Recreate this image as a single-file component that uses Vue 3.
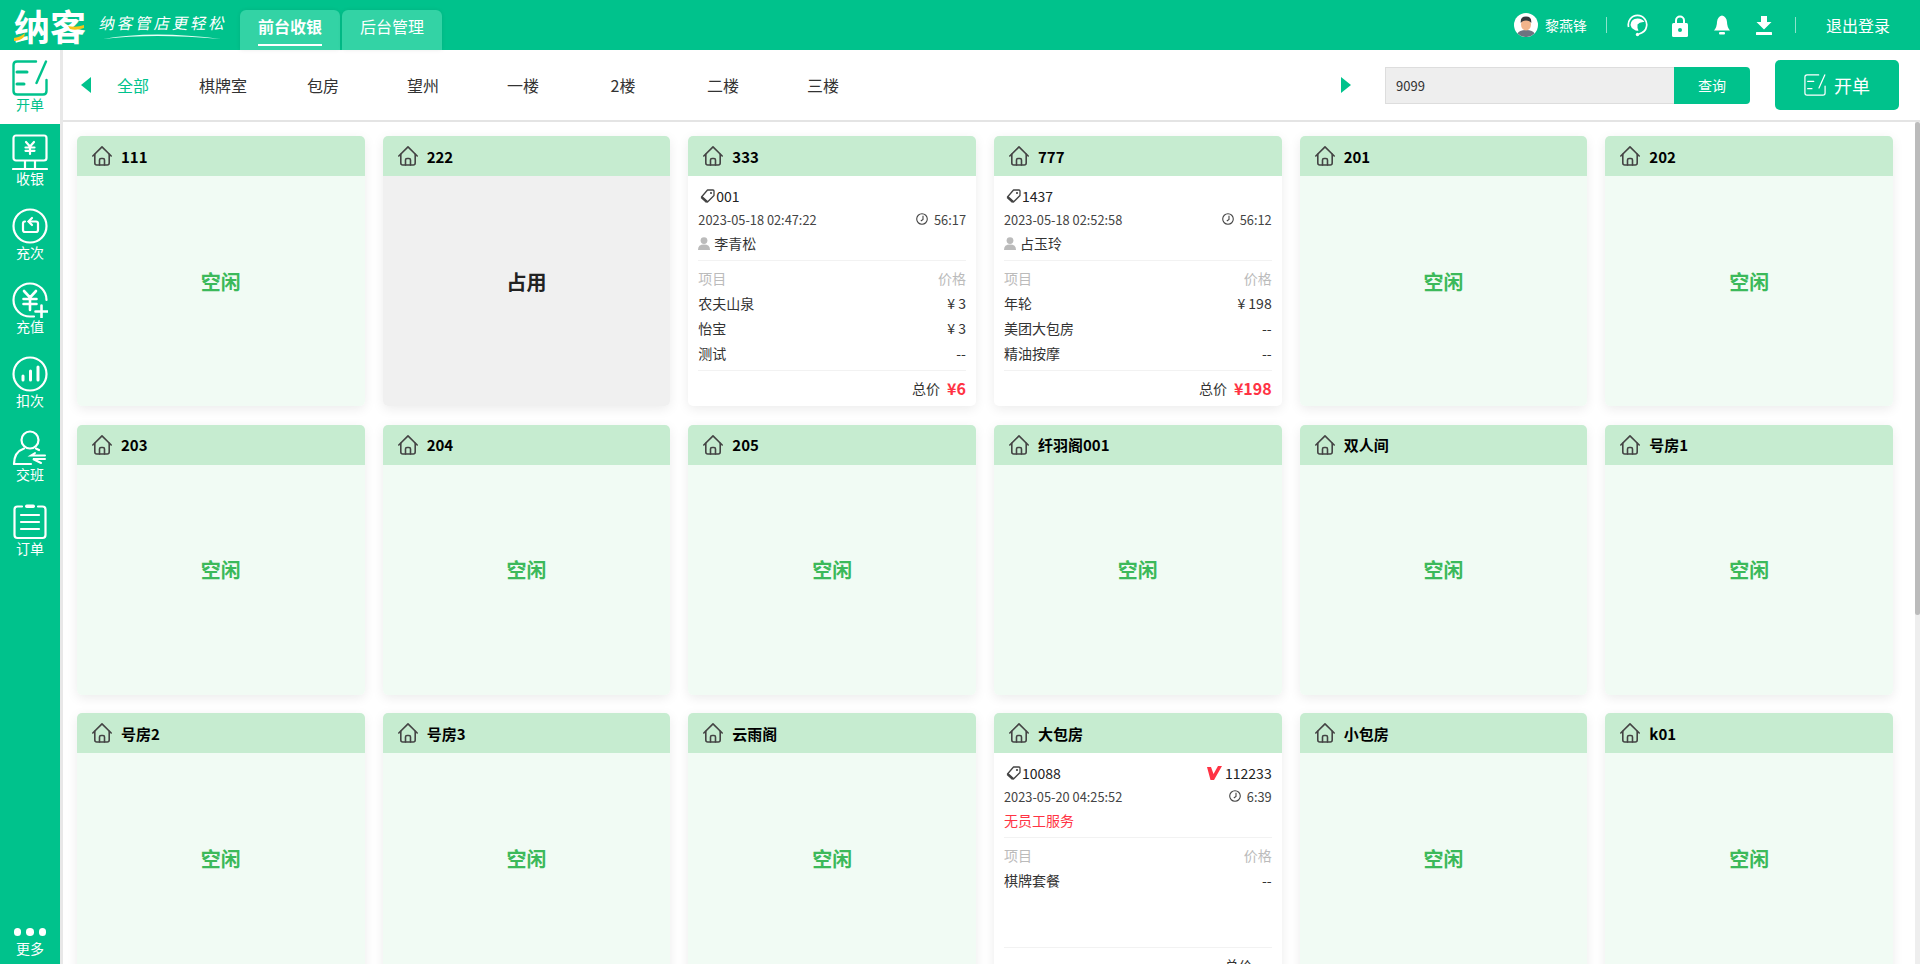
<script setup>
const filters = ['全部', '棋牌室', '包房', '望州', '一楼', '2楼', '二楼', '三楼']

const idle = name => ({ name, state: 'idle' })
const rooms = [
  idle('111'),
  { name: '222', state: 'busy' },
  {
    name: '333', state: 'order', tag: '001', date: '2023-05-18 02:47:22', timer: '56:17', staff: '李青松', total: '¥6',
    items: [['农夫山泉', '¥ 3'], ['怡宝', '¥ 3'], ['测试', '--']]
  },
  {
    name: '777', state: 'order', tag: '1437', date: '2023-05-18 02:52:58', timer: '56:12', staff: '占玉玲', total: '¥198',
    items: [['年轮', '¥ 198'], ['美团大包房', '--'], ['精油按摩', '--']]
  },
  idle('201'), idle('202'), idle('203'), idle('204'), idle('205'),
  idle('纤羽阁001'), idle('双人间'), idle('号房1'), idle('号房2'), idle('号房3'), idle('云雨阁'),
  {
    name: '大包房', state: 'order', tag: '10088', vip: '112233', date: '2023-05-20 04:25:52', timer: '6:39', total: '--',
    items: [['棋牌套餐', '--']]
  },
  idle('小包房'), idle('k01')
]
</script>

<template>
  <div class="app">
    <header class="topbar">
      <div class="logo">
        <span class="logo-mark">纳客</span>
        <svg class="logo-accent" width="76" height="32" viewBox="0 0 76 32">
          <path d="M0 27 Q7 26 11 22 L10 26 Q6 30 0 30Z" fill="#f5c518" />
          <path d="M54 15 Q62 17 70 14 L70 17 Q62 20 56 18Z" fill="#f5c518" />
        </svg>
      </div>
      <div class="slogan">
        <span class="slogan-text">纳客管店更轻松</span>
        <svg class="slogan-line" width="118" height="8" viewBox="0 0 118 8">
          <path d="M0 6 Q50 -3 118 6 Q50 0 0 6Z" fill="#e8fff6" />
        </svg>
      </div>
      <nav class="tabs">
        <a class="tab tab-active"><span>前台收银</span></a>
        <a class="tab"><span>后台管理</span></a>
      </nav>
      <div class="top-right">
        <svg class="avatar" width="24" height="24" viewBox="0 0 24 24">
          <circle cx="12" cy="12" r="12" fill="#fff" />
          <path d="M3.5 20.5 Q5 17 12 17 Q19 17 20.5 20.5 A12 12 0 0 1 3.5 20.5Z" fill="#6d7480" />
          <ellipse cx="12" cy="11.5" rx="5" ry="6" fill="#f2b48c" />
          <path d="M6.8 10 Q6 3.5 12 3.5 Q18 3.5 17.2 10 Q16 7.5 12 7.5 Q8 7.5 6.8 10Z" fill="#33383d" />
        </svg>
        <span class="user-name">黎燕锋</span>
        <i class="top-sep sep-a"></i>
        <svg class="ti ti-head" width="21" height="24" viewBox="0 0 21 24" fill="none" stroke="#fff">
          <path d="M1.6 14 A9.2 9.2 0 1 1 19.4 14 Q18.5 19 12 21" stroke-width="1.7" />
          <path d="M3.5 12 Q4 5.5 10.5 5.5 Q15.5 5.5 17.5 9 Q12.5 8.5 10.5 11.5 Q10 15 11.5 17.5 Q9.5 18.5 7 16.5 Q4 15 3.5 12Z" fill="#fff" stroke="none" />
          <circle cx="10.5" cy="21.5" r="1.7" fill="#fff" stroke="none" />
        </svg>
        <svg class="ti ti-lock" width="16" height="23" viewBox="0 0 16 23">
          <path d="M4 10 V6.5 A4 4 0 0 1 12 6.5 V10" fill="none" stroke="#fff" stroke-width="2" />
          <rect y="9" width="16" height="14" rx="1.5" fill="#fff" />
          <circle cx="8" cy="16" r="2" fill="#00c28c" />
        </svg>
        <svg class="ti ti-bell" width="16" height="20" viewBox="0 0 16 20">
          <path d="M8 0.5 Q12.5 1.5 13 7 Q13 12 16 15.5 H0 Q3 12 3 7 Q3.5 1.5 8 0.5Z" fill="#fff" />
          <rect x="5" y="17" width="6" height="2.4" rx="1" fill="#fff" />
        </svg>
        <svg class="ti ti-down" width="16" height="19" viewBox="0 0 16 19">
          <path d="M5 0 H11 V6 H15.5 L8 13.5 L0.5 6 H5Z" fill="#fff" />
          <rect y="16" width="16" height="3" rx="0.5" fill="#fff" />
        </svg>
        <i class="top-sep sep-b"></i>
        <span class="logout">退出登录</span>
      </div>
    </header>

    <div class="main">
      <aside class="sidebar">
        <a class="side-item side-active">
          <svg width="36" height="36" viewBox="0 0 36 36" fill="none" stroke="#00c28c" stroke-width="2.4" stroke-linecap="round">
            <path d="M24 1.5 H5 Q1.5 1.5 1.5 5 V31 Q1.5 34.5 5 34.5 H31 Q34.5 34.5 34.5 31 V20" />
            <path d="M34 1.5 L24.5 23" />
            <path d="M5 12 H15" stroke-width="3" />
            <path d="M5 24 H12" stroke-width="3" />
          </svg>
          <span>开单</span>
        </a>
        <a class="side-item">
          <svg width="36" height="36" viewBox="0 0 36 36" fill="none" stroke="#fff" stroke-width="2.2" stroke-linecap="round">
            <rect x="1.5" y="1.5" width="33" height="25" rx="2.5" />
            <path d="M13 27 V34 M23 27 V34" />
            <path d="M1 35 H35" />
            <path d="M14 8 L18 12.5 L22 8 M18 12.5 V20 M13.5 13.5 H22.5 M13.5 16.8 H22.5" stroke-width="2.2" />
          </svg>
          <span>收银</span>
        </a>
        <a class="side-item">
          <svg width="36" height="36" viewBox="0 0 36 36" fill="none" stroke="#fff" stroke-width="2.2" stroke-linecap="round">
            <circle cx="18" cy="18" r="16.5" />
            <path d="M19 13.5 H24 Q26 13.5 26 15.5 V22 Q26 24 24 24 H13 Q11 24 11 22 V15.5 Q11 13.5 13 13.5" />
            <path d="M20 10 L16.5 13.5 L20 17" />
          </svg>
          <span>充次</span>
        </a>
        <a class="side-item">
          <svg width="36" height="36" viewBox="0 0 36 36" fill="none" stroke="#fff" stroke-width="2.2" stroke-linecap="round">
            <path d="M34.5 18 A16.5 16.5 0 1 0 18 34.5 H22" />
            <path d="M12 9 L18 15.5 L24 9 M18 15.5 V28 M11.5 17 H24.5 M11.5 22 H24.5" stroke-width="2.6" />
            <path d="M23.5 29.5 H35.5 M29.5 23.5 V35.5" stroke-width="2.6" />
          </svg>
          <span>充值</span>
        </a>
        <a class="side-item">
          <svg width="36" height="36" viewBox="0 0 36 36" fill="none" stroke="#fff" stroke-width="2.2" stroke-linecap="round">
            <circle cx="18" cy="18" r="16.5" />
            <path d="M11 24 V20 M18.5 24 V15 M26 24 V11" stroke-width="3" />
          </svg>
          <span>扣次</span>
        </a>
        <a class="side-item">
          <svg width="36" height="36" viewBox="0 0 36 36" fill="none" stroke="#fff" stroke-width="2.2" stroke-linecap="round">
            <circle cx="18" cy="10" r="8.5" />
            <path d="M2 34 Q2 22 12 18.5 M24 18.5 L27 20" />
            <path d="M2 34 H19" />
            <path d="M23 23 L19 25.5 H33 M33 29 H21 L29 33" stroke-width="2" />
          </svg>
          <span>交班</span>
        </a>
        <a class="side-item">
          <svg width="36" height="36" viewBox="0 0 36 36" fill="none" stroke="#fff" stroke-width="2.2" stroke-linecap="round">
            <path d="M10 2.5 H5.5 Q2.5 2.5 2.5 5.5 V31 Q2.5 34 5.5 34 H30.5 Q33.5 34 33.5 31 V5.5 Q33.5 2.5 30.5 2.5 H26" />
            <rect x="13" y="0.5" width="10" height="3.4" rx="1.7" fill="#fff" stroke="none" />
            <path d="M9 11 H27 M9 18 H27 M9 25 H27" />
          </svg>
          <span>订单</span>
        </a>
        <a class="side-item side-more">
          <div class="dots"><i></i><i></i><i></i></div>
          <span>更多</span>
        </a>
      </aside>

      <section class="content">
        <div class="filter-bar">
          <i class="arrow arrow-left"></i>
          <ul class="filters">
            <li v-for="(f, i) in filters" :key="f" :class="{ 'filter-active': i === 0 }">{{ f }}</li>
          </ul>
          <i class="arrow arrow-right"></i>
          <div class="search">
            <input class="search-input" value="9099" />
            <button class="search-btn">查询</button>
          </div>
          <button class="open-btn">
            <svg width="22" height="22" viewBox="0 0 36 36" fill="none" stroke="#fff" stroke-width="2" stroke-linecap="round">
              <path d="M24 1.5 H5 Q1.5 1.5 1.5 5 V31 Q1.5 34.5 5 34.5 H31 Q34.5 34.5 34.5 31 V20" />
              <path d="M34 1.5 L24.5 23" />
              <path d="M6 12 H16 M6 24 H13" />
            </svg>
            <span>开单</span>
          </button>
        </div>

        <div class="rooms-wrap">
          <div class="rooms">
            <article v-for="room in rooms" :key="room.name" class="card">
              <div class="card-head">
                <svg width="20" height="20" viewBox="0 0 20 20" fill="none" stroke="#444" stroke-width="1.6" stroke-linejoin="round" stroke-linecap="round">
                  <path d="M0.8 10 L10 0.9 L19.2 10" />
                  <path d="M2.8 8.2 V17 Q2.8 19 4.8 19 H15.2 Q17.2 19 17.2 17 V8.2" />
                  <path d="M7.5 19 V14 Q7.5 12.5 9 12.5 H11 Q12.5 12.5 12.5 14 V19" />
                </svg>
                <span>{{ room.name }}</span>
              </div>

              <div v-if="room.state === 'idle'" class="card-state state-idle">空闲</div>
              <div v-else-if="room.state === 'busy'" class="card-state state-busy">占用</div>

              <div v-else class="card-body">
                <div class="line line-tag">
                  <span class="tag">
                    <svg width="15" height="14" viewBox="0 0 15 14">
                      <path d="M7.5 1 H13 Q14 1 14 2 V6.5 L7.5 13 L1.5 8 Z" fill="none" stroke="#444" stroke-width="1.3" stroke-linejoin="round" />
                      <path d="M1.5 8 L7 13" stroke="#444" stroke-width="2.4" />
                      <circle cx="11" cy="4" r="1.1" fill="#444" />
                    </svg>{{ room.tag }}
                  </span>
                  <span v-if="room.vip" class="vip">
                    <svg width="15" height="14" viewBox="0 0 15 14">
                      <path d="M0 1 H4 L6.5 8 L11 0 H15 L7 14 H3.5Z" fill="#ff3344" />
                    </svg>{{ room.vip }}
                  </span>
                </div>
                <div class="line line-date">
                  <span>{{ room.date }}</span>
                  <span class="timer">
                    <svg width="12" height="12" viewBox="0 0 12 12" fill="none" stroke="#444" stroke-width="1.1">
                      <circle cx="6" cy="6" r="5.3" />
                      <path d="M7 2.8 V6.5 L4.8 8" />
                    </svg>{{ room.timer }}
                  </span>
                </div>
                <div v-if="room.staff" class="line-staff">
                  <svg width="12" height="13" viewBox="0 0 12 13" fill="#bbb">
                    <circle cx="6" cy="3.6" r="3.4" />
                    <path d="M0 13 Q0 7.6 6 7.6 Q12 7.6 12 13Z" />
                  </svg>
                  <span>{{ room.staff }}</span>
                </div>
                <div v-else class="line-staff no-staff">无员工服务</div>

                <div class="items">
                  <div class="row row-head"><span>项目</span><span>价格</span></div>
                  <div v-for="it in room.items" :key="it[0]" class="row">
                    <span>{{ it[0] }}</span><span>{{ it[1] }}</span>
                  </div>
                </div>
                <div class="total">
                  <span>总价</span><b>{{ room.total }}</b>
                </div>
              </div>
            </article>
          </div>
          <div class="scrollbar"><div class="scrollbar-thumb"></div></div>
        </div>
      </section>
    </div>
  </div>
</template>

<style>
html, body { margin: 0; height: 100%; overflow: hidden; background: #fff; }
</style>

<style scoped>
.app {
  height: 964px;
  display: flex;
  flex-direction: column;
  overflow: hidden;
  font-family: "Noto Sans CJK SC", "Open Sans", sans-serif;
  color: #333;
  font-size: 14px;
}

/* top bar */
.topbar {
  height: 50px;
  flex: none;
  background: #00c28c;
  display: flex;
  align-items: flex-end;
  color: #fff;
}
.logo { position: relative; width: 100px; height: 50px; flex: none; }
.logo-mark {
  display: block;
  padding-left: 14px;
  font-size: 36px;
  line-height: 50px;
  font-weight: 700;
  color: #fff;
}
.logo-accent { position: absolute; left: 14px; top: 11px; }
.slogan { position: relative; width: 140px; height: 50px; flex: none; }
.slogan-text {
  display: block;
  font-size: 15.5px;
  line-height: 44px;
  letter-spacing: 2.8px;
  transform: skewX(-12deg);
  transform-origin: left center;
  white-space: nowrap;
  font-weight: 400;
}
.slogan-line { position: absolute; left: 3px; top: 33px; }
.tabs { display: flex; gap: 2px; }
.tab {
  width: 100px;
  height: 40px;
  background: #33d3a5;
  border-radius: 6px 6px 0 0;
  display: flex;
  justify-content: center;
  align-items: flex-start;
  font-size: 16px;
  line-height: 32px;
  box-shadow: 0 0 4px rgba(0, 0, 0, 0.08);
}
.tab span { display: block; height: 34px; }
.tab-active { font-weight: 700; }
.tab-active span { border-bottom: 2px solid #fff; }
.top-right {
  margin-left: auto;
  height: 50px;
  display: flex;
  align-items: center;
  padding-right: 30px;
}
.user-name { margin-left: 7px; margin-right: -1px; }
.top-sep { width: 1px; height: 16px; background: rgba(255, 255, 255, 0.55); }
.sep-a { margin-left: 20px; }
.ti { flex: none; }
.ti-head { margin-left: 20px; }
.ti-lock { margin-left: 24px; }
.ti-bell { margin-left: 26px; }
.ti-down { margin-left: 26px; }
.sep-b { margin-left: 23px; }
.logout { margin-left: 30px; font-size: 16px; }

/* layout */
.main { flex: 1; min-height: 0; display: flex; }
.sidebar {
  width: 60px;
  flex: none;
  background: #00c28c;
  border-right: 3px solid #e8e8e8;
  display: flex;
  flex-direction: column;
  color: #fff;
}
.side-item {
  height: 74px;
  flex: none;
  box-sizing: border-box;
  padding-top: 10px;
  display: flex;
  flex-direction: column;
  align-items: center;
}
.side-item span { font-size: 14px; line-height: 16px; }
.side-active { background: #fff; color: #00c28c; }
.side-more { margin-top: auto; height: 50px; padding-top: 14px; }
.dots { display: flex; gap: 5px; height: 7px; margin-bottom: 5px; }
.dots i { width: 7.5px; height: 7.5px; border-radius: 50%; background: #fff; }

/* filter bar */
.content { flex: 1; min-width: 0; display: flex; flex-direction: column; }
.filter-bar {
  height: 70px;
  flex: none;
  border-bottom: 2px solid #e4e4e4;
  display: flex;
  align-items: center;
  padding: 0 21px 0 18px;
}
.arrow { width: 0; height: 0; border-style: solid; flex: none; }
.arrow-left { border-width: 8px 10px 8px 0; border-color: transparent #00c28c transparent transparent; }
.arrow-right { border-width: 8px 0 8px 10px; border-color: transparent transparent transparent #00c28c; margin-left: auto; }
.filters {
  list-style: none;
  margin: 0 0 0 2px;
  padding: 0;
  display: flex;
  font-size: 16px;
}
.filters li { width: 100px; text-align: center; }
.filters li:first-child { width: 80px; }
.filter-active { color: #00c28c; }
.search { display: flex; margin-left: 34px; height: 37px; }
.search-input {
  width: 289px;
  box-sizing: border-box;
  border: 1px solid #ddd;
  border-right: 0;
  background: #eee;
  padding: 0 10px;
  font: 13px "Noto Sans CJK SC", sans-serif;
  color: #333;
  outline: none;
}
.search-btn {
  width: 76px;
  border: 0;
  border-radius: 0 4px 4px 0;
  background: #00c28c;
  color: #fff;
  font: 14px "Noto Sans CJK SC", sans-serif;
}
.open-btn {
  margin-left: 25px;
  width: 124px;
  height: 50px;
  border: 0;
  border-radius: 5px;
  background: #00c28c;
  color: #fff;
  font: 18px "Noto Sans CJK SC", sans-serif;
  display: flex;
  align-items: center;
  justify-content: center;
  gap: 8px;
}

/* rooms */
.rooms-wrap { flex: 1; min-height: 0; display: flex; }
.rooms {
  flex: 1;
  min-width: 0;
  overflow: hidden;
  box-sizing: border-box;
  padding: 14px 22px 0 14px;
  display: grid;
  grid-template-columns: repeat(6, minmax(0, 1fr));
  grid-auto-rows: 270px;
  gap: 18.5px 18px;
}
.scrollbar { width: 5px; flex: none; background: #eee; }
.scrollbar-thumb { height: 493px; background: #bbb; border-radius: 3px; }

.card {
  border-radius: 5px;
  background: #fff;
  box-shadow: 0 3px 12px rgba(0, 0, 0, 0.08);
  display: flex;
  flex-direction: column;
  overflow: hidden;
}
.card-head {
  height: 40px;
  flex: none;
  background: #c6ecd0;
  display: flex;
  align-items: center;
  gap: 9px;
  padding-left: 15px;
  color: #000;
  font-size: 15px;
  font-weight: 700;
}
.card-state {
  flex: 1;
  display: flex;
  align-items: center;
  justify-content: center;
  padding-bottom: 20px;
  font-size: 20px;
  font-weight: 700;
}
.state-idle { background: #f1fbf4; color: #3cb95a; }
.state-busy { background: #f0f0f0; color: #222; }

.card-body {
  flex: 1;
  min-height: 0;
  display: flex;
  flex-direction: column;
  padding: 7px 10px 0;
}
.line { display: flex; justify-content: space-between; align-items: center; }
.line-tag { height: 25px; font-size: 14px; color: #222; }
.tag, .vip { display: flex; align-items: center; }
.tag svg { margin: 0 1px 0 2px; }
.vip svg { margin-right: 3px; }
.line-date { height: 22px; font-size: 12.8px; color: #444; }
.timer { display: flex; align-items: center; gap: 6px; }
.line-staff {
  height: 26.5px;
  display: flex;
  align-items: center;
  gap: 4px;
  font-size: 14px;
  color: #333;
}
.no-staff { color: #ff3344; }
.items {
  flex: 1;
  border-top: 1px solid #f2f2f2;
  border-bottom: 1px solid #f2f2f2;
  padding-top: 5px;
  margin-top: 3px;
}
.row { height: 25px; display: flex; justify-content: space-between; align-items: center; font-size: 14px; color: #333; }
.row-head { color: #bbb; }
.total {
  height: 35px;
  flex: none;
  padding-bottom: 2px;
  box-sizing: border-box;
  display: flex;
  justify-content: flex-end;
  align-items: center;
  gap: 7px;
  font-size: 14px;
}
.total b { color: #ff3344; font-size: 16px; font-weight: 700; }
</style>
